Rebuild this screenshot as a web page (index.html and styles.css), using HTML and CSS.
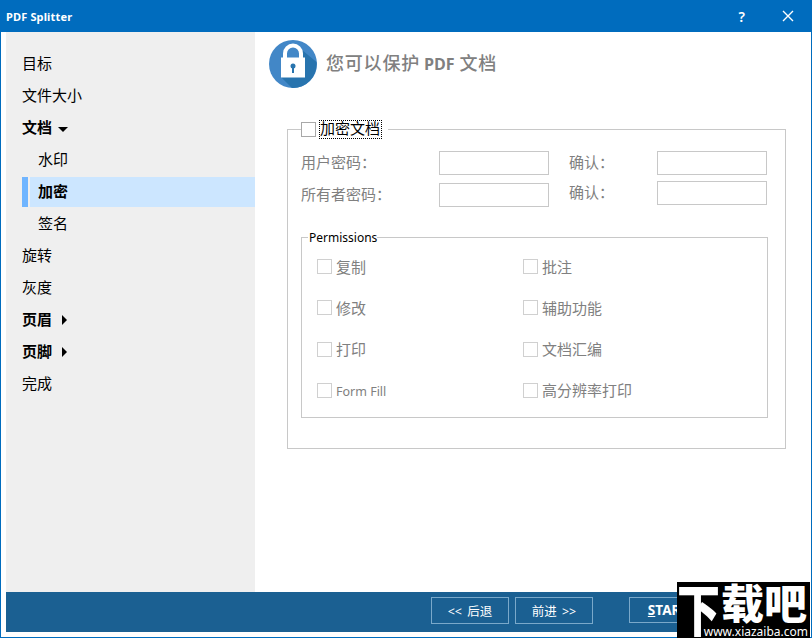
FILE: index.html
```
<!DOCTYPE html>
<html lang="zh-CN">
<head>
 <meta charset="utf-8">
 <title>PDF Splitter</title>
 <link rel="stylesheet" href="styles.css">
</head>
<body>
<div class="window">
  <div class="titlebar">
	<span class="title">PDF Splitter</span>
	<span class="help">?</span>
	<svg class="close" width="12" height="12" viewBox="0 0 12 12"><path d="M1 1L11 11M11 1L1 11" stroke="#fff" stroke-width="1.4"/></svg>
  </div>
  <div class="main">
	<ul class="menu">
		<li>目标</li>
		<li>文件大小</li>
		<li class="group">文档<i class="down"></i></li>
		<li class="sub">水印</li>
		<li class="sub active">加密</li>
		<li class="sub">签名</li>
		<li>旋转</li>
		<li>灰度</li>
		<li class="group">页眉<i class="right"></i></li>
		<li class="group">页脚<i class="right"></i></li>
		<li>完成</li>
	</ul>
	<div class="content">
		<div class="head">
			<svg width="48" height="48" viewBox="0 0 48 48">
				<circle cx="24" cy="24" r="24" fill="#4287c7"/>
				<path d="M33 10L47.500 22A24 24 0 0 1 23 48L12 37L33 36Z" fill="#2874ae"/>
				<path d="M16 19V13.500a8 8 0 0 1 16 0V19" fill="none" stroke="#fff" stroke-width="4"/>
				<rect x="12" y="17.500" width="24" height="20" fill="#fff"/>
				<circle cx="24" cy="26" r="2.500" fill="#2874ae"/>
				<rect x="23" y="26" width="2" height="7" fill="#2874ae"/>
			</svg>
			<h1>您可以保护<b>PDF</b>文档</h1>
		</div>
		<fieldset class="encrypt">
			<legend><i class="box"></i><span class="focus">加密文档</span></legend>
			<div class="passwords">
				<div class="col left">
					<label>用户密码：<input type="text" disabled></label>
					<label>所有者密码：<input type="text" disabled></label>
				</div>
				<div class="col confirm">
					<label>确认：<input type="text" disabled></label>
					<label>确认：<input type="text" disabled></label>
				</div>
			</div>
			<fieldset class="permissions">
				<legend>Permissions</legend>
				<div class="checks">
					<label><i class="box"></i>复制</label>
					<label><i class="box"></i>批注</label>
					<label><i class="box"></i>修改</label>
					<label><i class="box"></i>辅助功能</label>
					<label><i class="box"></i>打印</label>
					<label><i class="box"></i>文档汇编</label>
					<label><i class="box"></i><span class="en">Form Fill</span></label>
					<label><i class="box"></i>高分辨率打印</label>
				</div>
			</fieldset>
		</fieldset>
	</div>
  </div>
  <div class="bottom">
	<span class="btn">&lt;&lt; 后退</span>
	<span class="btn">前进 &gt;&gt;</span>
	<span class="btn start"><u>S</u>TART</span>
  </div>
</div>
<div class="watermark">
	<div class="mark-name"><span class="tall">下</span><span>载吧</span></div>
	<div class="mark-url">www.xiazaiba.com</div>
</div>
</body>
</html>
```
FILE: styles.css
```
*{box-sizing:border-box;}
body{margin:0;width:812px;height:638px;overflow:hidden;position:relative;background:#fff;
	font-family:"Noto Sans","Noto Sans CJK SC",sans-serif;font-size:15px;color:#000;}

.window{width:812px;height:638px;border:1px solid #006cbe;border-top:0;display:flex;flex-direction:column;}
.titlebar{height:32px;background:#006cbe;color:#fff;display:flex;align-items:center;padding:0 17px 0 5px;}
.title{flex:1;font-size:11px;font-weight:bold;letter-spacing:.15px;padding-top:1px;}
.help{font-size:14px;font-weight:600;margin-right:37px;}

.main{height:560px;display:flex;padding-left:5px;}
.menu{width:249px;margin:0;padding:16px 0 0 16px;list-style:none;background:#efefef;}
.menu li{height:30px;line-height:28px;margin-bottom:2px;padding-bottom:1px;display:flex;align-items:center;}
.menu .group,.menu .active{font-weight:bold;}
.menu .sub{padding-left:16px;}
.menu .active{position:relative;top:1px;padding:0 0 2px 10px;border-left:6px solid #70b5ff;
	background:linear-gradient(to right,#efefef 2px,#cce6ff 2px);}
.down{border:5px solid transparent;border-top-color:#000;border-bottom:0;margin:5px 0 0 6px;}
.right{border:5px solid transparent;border-left-color:#000;border-right:0;margin:3px 0 0 10px;}

.content{flex:1;padding:8px 25px 0 32px;}
.head{display:flex;margin-left:-18px;height:48px;}
.head h1{margin:0 0 0 9px;font-size:18px;line-height:44px;font-weight:500;color:#808080;letter-spacing:.8px;
	font-family:"Noto Sans CJK SC",sans-serif;}
.head b{font-family:"Open Sans","Noto Sans",sans-serif;font-size:16px;font-weight:bold;letter-spacing:-.1px;margin:0 5px 0 4px;}

fieldset{margin:0;border:1px solid #c8c8c8;min-width:0;}
.encrypt{margin-top:32px;height:329px;padding:0 17px 0 13px;}
.encrypt>legend{display:flex;align-items:center;height:19px;padding:0 6px 0 0;}
.box{width:15px;height:15px;border:1px solid #d0d0d0;background:#fff;flex:none;}
.encrypt>legend .box{border-color:#a8a8a8;}
.focus{border:1px dotted #000;height:19px;line-height:15px;margin-left:3px;width:63px;white-space:nowrap;}
.passwords{display:flex;gap:20px;padding-top:12px;color:#808080;}
.col{display:flex;flex-direction:column;gap:8px;}
.col label{display:flex;justify-content:space-between;height:24px;line-height:22px;}
.col input{width:110px;height:24px;border:1px solid #c8c8c8;background:#fff;padding:0;}
.left{width:248px;}
.confirm{width:198px;gap:6px;}

.permissions{width:467px;height:189px;margin-top:22px;padding:0 0 0 15px;}
.permissions legend{margin-left:-9px;padding:0 0 0 1px;height:17px;line-height:17px;font-size:12px;}
.checks{display:grid;grid-template-columns:206px 1fr;grid-auto-rows:41.3px;color:#808080;}
.checks label{display:flex;align-items:center;gap:4px;height:41px;line-height:18px;}
.en{font-size:12.5px;padding-top:3px;}

.bottom{height:40px;margin:0 5px;padding:5px 0 0 425px;background:#1b6092;display:flex;gap:6px;color:#fff;font-size:12.5px;}
.btn{width:78px;height:27px;line-height:27px;border:1px solid #7aa9ca;text-align:center;white-space:pre;word-spacing:2px;}
.start{height:26px;margin-left:30px;font-weight:bold;font-size:13.5px;line-height:25px;}

/* site mark over the lower right corner */
.watermark{position:absolute;left:677px;top:582px;width:133px;height:56px;background:#000;color:#fff;
	display:flex;flex-direction:column;}
.mark-name{display:flex;height:41px;font:900 43px/40px "Noto Sans CJK SC",sans-serif;white-space:nowrap;}
.mark-name span{width:88px;transform:scale(1,.95);transform-origin:top;}
.mark-name .tall{width:44px;transform:scale(1,1.3) translateY(-1px);}
.mark-url{align-self:flex-end;height:15px;margin-right:2px;font-size:12px;line-height:17px;}
```
